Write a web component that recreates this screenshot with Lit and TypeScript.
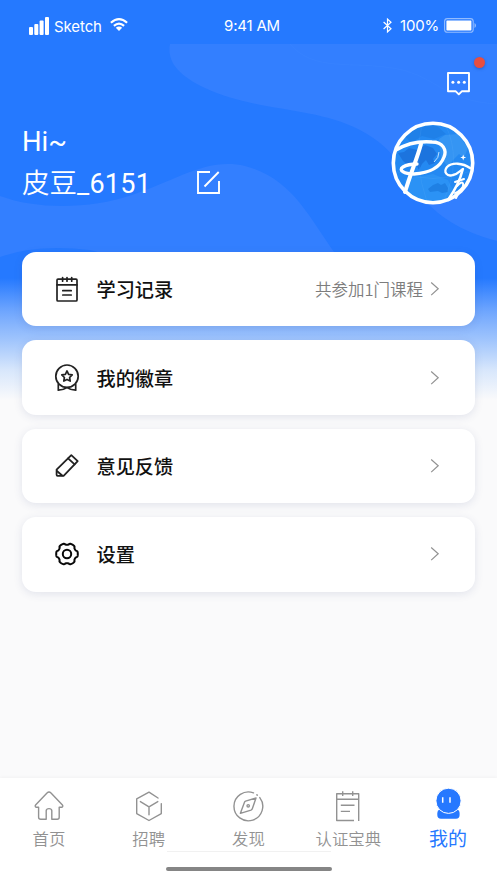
import { LitElement, html, css, svg } from "lit";
import { customElement } from "lit/decorators.js";

const stroke = (size: number, body: unknown, cls = "icon") =>
  html`<svg class=${cls} width=${size} height=${size} viewBox="0 0 ${size} ${size}" fill="none"
    stroke="currentColor" stroke-linecap="round" stroke-linejoin="round">${body}</svg>`;

const recordIcon = stroke(28, svg`
  <g stroke-width="1.7"><rect x="4" y="4.2" width="20" height="21.8" rx="1"/>
  <path d="M4 9.9H24M9.6 2.6V6.2M14 2.6V6.2M18.7 2.6V6.2M9.8 15.7H18.2M9.8 20H18.2"/></g>`);
const badgeIcon = stroke(28, svg`
  <g stroke-width="1.7"><circle cx="14" cy="12.2" r="11.2"/>
  <path d="M14 6.9L15.6 10.4L19.2 10.9L16.6 13.5L17.2 17.1L14 15.4L10.8 17.1L11.4 13.5L8.8 10.9L12.4 10.4Z"/>
  <path d="M5.3 20.3V26.2Q10 26.2 14 23.6Q18 26.2 22.7 26.2V20.3"/></g>`);
const penIcon = stroke(28, svg`
  <g stroke-width="1.8"><path d="M3.6 17.6L18.3 3.2L24.7 9.1L10.6 23.8H4.6Q3.6 23.8 3.6 22.8Z"/>
  <path d="M15.1 6.4L21.6 12.3M3.9 19L9.2 23.5"/></g>`);

// Six shallow teeth spaced evenly around a circular hub.
const gearPath = Array.from({ length: 120 }, (_, i) => {
  const a = (i * Math.PI) / 60;
  const r = 10 + 0.8 * Math.tanh(3 * (Math.cos(6 * a) + 0.35));
  return `${i ? "L" : "M"}${(14 + r * Math.cos(a)).toFixed(2)} ${(14 + r * Math.sin(a)).toFixed(2)}`;
}).join("") + "Z";
const gearIcon = stroke(28, svg`<g stroke-width="2"><circle cx="14" cy="14" r="4.2"/><path d=${gearPath}/></g>`);
const chevron = html`<svg class="chevron" width="10" height="16" viewBox="0 0 10 16" fill="none"
  stroke="#929292" stroke-width="1.2"><path d="M1.2 1.5L8.2 7.8L1.2 14.1"/></svg>`;

const homeIcon = stroke(34, svg`
  <g stroke-width="1.4"><path d="M6.6 18.3H4.2Q2.4 17.5 3.8 15.7L15 4Q17 2.2 19 4L30.2 15.7Q31.6 17.5 29.8 18.3H27.2V28.2Q27.2 30.2 25.2 30.2H19.8V21.6Q19.6 19.6 17 19.6Q14.4 19.6 14.2 21.6V30.2H8.8Q6.6 30.2 6.6 28.2V18.3"/></g>`);
const cubeIcon = stroke(34, svg`
  <g stroke-width="1.4"><path d="M26 9L17 3.1L4.7 9.8V24.6L17 31.5L29.3 24.6V14.6M8.4 12.6L17 17.9L25.8 12.6M17 17.9V25.8"/></g>`);
const compassIcon = stroke(34, svg`
  <g stroke-width="1.4"><path d="M22.5 3.9A14.4 14.4 0 1 0 28.8 8.6"/><path d="M25.8 5.8L26.4 6.2"/>
  <path d="M25 9L14.6 12.2Q13.8 12.6 13.5 13.3L9.4 24.3L20 21.2Q21 20.8 21.3 19.8Z"/><circle cx="17.2" cy="16.8" r="1.2"/></g>`);
const bookIcon = stroke(34, svg`
  <g stroke-width="1.4" stroke-linecap="butt"><path d="M27.7 32V4.8H5.7V31.5H23M5.7 10.3H27.7M11.7 2.2V7M21.7 2.2V7M9.8 16.2H23.5M9.8 22.4H19"/></g>`);
const meIcon = html`<svg class="icon" width="34" height="34" viewBox="0 0 34 34">
  <path d="M8.6 20.5Q6.3 21.1 6.3 24V26Q6.3 29.7 10 29.7H25Q28.6 29.7 28.6 26V24Q28.6 21.1 26.4 20.5" fill="#2678ff"/>
  <circle cx="17.5" cy="11.8" r="12.6" fill="#2678ff" stroke="#fff" stroke-width="1"/>
  <path d="M11.7 8.2V13.7M19 8.2V13.7" stroke="#fff" stroke-width="1.5"/></svg>`;

@customElement("app-root")
export class AppRoot extends LitElement {
  static styles = css`
    :host {
      display: flex; flex-direction: column; position: relative; isolation: isolate;
      width: 497px; height: 883px; overflow: hidden; box-sizing: border-box;
      background: #fafafb; font-family: Roboto, "Noto Sans CJK SC", sans-serif; color: #111;
    }
    svg { display: block; flex: none; overflow: visible; }
    .backdrop { position: absolute; inset: 0 0 auto; z-index: -1; }
    .status {
      height: 44px; display: grid; grid-template-columns: 1fr auto 1fr; align-items: center;
      box-sizing: border-box; padding: 8px 21px 0 29px; color: #fff;
      font: 15px/20px Inter, sans-serif; letter-spacing: -0.2px;
    }
    .carrier, .power { display: flex; align-items: center; }
    .carrier { gap: 5px; }
    .carrier .name { padding-top: 2px; letter-spacing: -0.1px; }
    .carrier .wifi { margin: -3px 0 0 3px; }
    .clock { font-size: 15px; padding-right: 1px; }
    .power { justify-content: flex-end; gap: 5px; }
    .power .bt { margin: -2px 3px 0 0; }
    .power .battery { margin-top: -1px; }
    .hero { height: 208px; display: flex; justify-content: space-between; box-sizing: border-box; padding: 0 22px; color: #fff; }
    .who { padding-top: 77px; font-size: 28px; line-height: 42px; }
    .hi { height: 42px; font-size: 27.5px; }
    .name-row { display: flex; align-items: center; }
    .nick { width: 175px; font-weight: 350; font-size: 27.5px; white-space: nowrap; }
    .digits { font-weight: 400; font-size: 27px; letter-spacing: 0.25px; }
    .edit { margin-top: -4px; }
    .side { display: flex; flex-direction: column; align-items: flex-end; }
    .message { position: relative; margin: 27px 4px 0 0; }
    .dot {
      position: absolute; left: 27px; top: -14px; width: 11px; height: 11px; border-radius: 50%;
      background: #e84e40; box-shadow: 0 1px 3px #1541a080;
    }
    .avatar { margin-top: 25px; }
    .list { display: flex; flex-direction: column; gap: 14px; padding: 0 22px; }
    .card {
      height: 74.4px; box-sizing: border-box; display: flex; align-items: center; background: #fff;
      border-radius: 14px; padding: 0 35px 0 31px; box-shadow: 0 2px 8px rgba(60, 75, 130, 0.13);
    }
    .card .icon { color: #222; }
    .card.dark .icon { color: #080808; }
    .label { margin-left: 15.5px; font-size: 19.2px; line-height: 28px; font-weight: 500; flex: 1; padding-top: 4px; }
    .note {
      color: #7d7d7d; font: 350 16.5px/24px "Noto Sans CJK SC", sans-serif;
      margin-right: 7px;
    }
    .tabs {
      margin-top: auto; height: 105px; background: #fff; box-shadow: 0 -1px 3px #00000009;
      display: flex; flex-direction: column; align-items: center;
    }
    .tab-row { display: grid; grid-template-columns: repeat(5, 1fr); width: 499px; height: 73px; }
    .tab { display: flex; flex-direction: column; align-items: center; color: #929292; padding-top: 11px; box-sizing: border-box; }
    .tab span { font-size: 16.4px; line-height: 24px; margin-top: 5px; white-space: nowrap; font-weight: 350; }
    .tab.on { color: #2678ff; }
    .tab.on span { font-size: 19px; font-weight: 400; }
    .rule { width: 164px; height: 1px; background: #f1f1f1; }
    .grip { width: 166px; height: 4px; border-radius: 2px; background: #858585; margin-top: 15px; }
  `;

  private backdrop() {
    return html`<svg class="backdrop" width="497" height="410" viewBox="0 0 497 410">
      <defs>
        <linearGradient id="fade" x1="0" y1="0" x2="0" y2="1">
          <stop offset="0" stop-color="#fafafb" stop-opacity="0"/>
          <stop offset=".25" stop-color="#fafafb" stop-opacity=".32"/>
          <stop offset=".5" stop-color="#e8f1fb" stop-opacity=".62"/>
          <stop offset=".75" stop-color="#eff5fb" stop-opacity=".88"/>
          <stop offset="1" stop-color="#fafafb"/>
        </linearGradient>
      </defs>
      <path fill="#2579ff" d="M0 0H497V400H0Z"/>
      <path fill="#337fff" d="M170 44H497V241C459 231 438 216 419 194C401 173 400 151 360 130C314 106 256 112 205 88C176 74 167 60 170 44Z"/>
      <path fill="#337fff" d="M0 196C38 210 91 209 132 195C177 180 207 157 245 166C291 178 308 215 334 252L370 310L0 310Z"/>
      <path fill="#2579ff" d="M0 257Q36 244 90 250L210 282V310H0Z"/>
      <path d="M290 44C315 73 351 60 398 69C437 77 444 101 497 104" fill="none" stroke="#3d87ff" stroke-opacity=".35"/>
      <path fill="url(#fade)" d="M0 278H497V400H0Z"/>
    </svg>`;
  }

  private avatar() {
    return html`<svg class="avatar" width="84" height="84" viewBox="0 0 84 84" fill="none">
      <defs><clipPath id="disc"><circle cx="42" cy="42" r="39"/></clipPath></defs>
      <circle cx="42" cy="42" r="39.7" fill="#2489f2"/>
      <g clip-path="url(#disc)">
        <path fill="#1f80e8" d="M14 15Q28 3 46 5L55 13L43 18L31 15L20 22Z"/>
        <path fill="#46a2f3" fill-opacity=".5" d="M48 18L54 14L67 13L77 27L73 37L68 33L63 38L57 46L50 37Z"/>
        <path fill="#1c74de" d="M7 32L13 31L18 27L26 29L34 24L42 27L46 33L42 38L44 42L38 44L35 39L31 43L28 49L25 43L18 45L12 40Z"/>
        <path fill="#319bf8" fill-opacity=".5" d="M13 58L42 53L57 59L65 75L43 82L21 78Z"/>
        <path fill="#1f80e4" d="M37 68L42 64L47 62L50 64L54 62L57 67L57 71L51 72L47 70L39 71Z"/>
        <path stroke="#83c4ff" stroke-opacity=".2" stroke-width=".6" d="M4 50Q42 65 80 50M31 3Q22 41 36 81M54 3Q72 39 52 81"/>
      </g>
      <g stroke="#fff" stroke-linecap="round" stroke-linejoin="round">
        <path stroke-width="3.3" d="M5 29C15 23 29 20 41 21C52 21 56 29 53 36C49 47 37 52 23 53C13 53 7 49 12 46Q17 43 26 43"/>
        <path stroke-width="4" d="M30 23C26 38 20 51 14 71"/>
        <path stroke-width="2.3" d="M79 47C72 42 61 41 56 46C52 51 56 56 62 54C67 53 69 50 72 48"/>
        <path stroke-width="2.6" d="M71.5 49C69 60 64 69 57 79"/>
        <path stroke-width="2" d="M64 61L73 58M66 65C73 57 74 65 69 69Q66 72 64 72M69 69L65 77"/>
      </g>
      <path d="M48 31Q48 37 43 41" stroke="#bfe1ff" stroke-width="1"/>
      <path fill="#fff" d="M72.2 33.5L73 35.8L75.2 36.5L73 37.2L72.2 39.5L71.4 37.2L69.2 36.5L71.4 35.8Z"/>
      <circle cx="42" cy="42" r="39.7" stroke="#fff" stroke-width="3.6"/>
    </svg>`;
  }

  private card(icon: unknown, label: string, note = "", dark = false) {
    return html`<div class="card ${dark ? "dark" : ""}">${icon}<span class="label">${label}</span>
      ${note ? html`<span class="note">${note}</span>` : ""}${chevron}</div>`;
  }

  private tab(icon: unknown, label: string, on = false) {
    return html`<div class="tab ${on ? "on" : ""}">${icon}<span>${label}</span></div>`;
  }

  render() {
    return html`
      ${this.backdrop()}
      <div class="status">
        <div class="carrier">
          <svg width="20" height="18" viewBox="0 0 20 18" fill="#fff"><rect y="10" width="4" height="8" rx="1"/><rect x="5.3" y="7" width="4" height="11" rx="1"/><rect x="10.6" y="3.5" width="4" height="14.5" rx="1"/><rect x="16" width="4" height="18" rx="1"/></svg>
          <span class="name">Sketch</span>
          <svg class="wifi" width="18" height="13" viewBox="0 0 18 13" fill="none" stroke="#fff" stroke-width="2.2"><path d="M.9 4.7Q9-2.6 17.1 4.7M3.9 7.8Q9 3.4 14.1 7.8"/><path fill="#fff" stroke="none" d="M5.8 9.8Q9 7.3 12.2 9.8L9 13Z"/></svg>
        </div>
        <span class="clock">9:41 AM</span>
        <div class="power">
          <svg class="bt" width="9" height="15" viewBox="0 0 9 15" fill="none" stroke="#fff" stroke-width="1.2"><path d="M.6 4L8 10.8L4.5 14V1L8 4.2L.6 11"/></svg>
          <span>100%</span>
          <svg class="battery" width="32" height="15" viewBox="0 0 32 15"><rect x=".6" y=".6" width="28.6" height="13.6" rx="2.8" fill="none" stroke="#fff" stroke-opacity=".5" stroke-width="1.1"/><rect x="2.4" y="2.4" width="25" height="10" rx=".6" fill="#fff"/><path d="M30.5 5V10Q32 9.3 32 7.5T30.5 5" fill="#fff" fill-opacity=".5"/></svg>
        </div>
      </div>
      <div class="hero">
        <div class="who">
          <div class="hi">Hi~</div>
          <div class="name-row">
            <span class="nick">皮豆<span class="digits">_6151</span></span>
            <svg class="edit" width="23" height="23" viewBox="0 0 23 23" fill="none" stroke="#fff" stroke-width="1.9"><path d="M13 1H1V22H22V10M7.5 15.5L21.7 1"/></svg>
          </div>
        </div>
        <div class="side">
          <div class="message">
            <svg width="24" height="25" viewBox="0 0 24 25" fill="none" stroke="#fff" stroke-width="1.9" stroke-linejoin="round"><path d="M1 2H22V20.3H14.8L11.8 23.3L8.8 20.3H1Z"/><g fill="#fff" stroke="none"><circle cx="5.9" cy="11.3" r="1.5"/><circle cx="11.6" cy="11.3" r="1.5"/><circle cx="17.3" cy="11.3" r="1.5"/></g></svg>
            <i class="dot"></i>
          </div>
          ${this.avatar()}
        </div>
      </div>
      <div class="list">
        ${this.card(recordIcon, "学习记录", "共参加1门课程")}
        ${this.card(badgeIcon, "我的徽章")}
        ${this.card(penIcon, "意见反馈")}
        ${this.card(gearIcon, "设置", "", true)}
      </div>
      <div class="tabs">
        <div class="tab-row">
          ${this.tab(homeIcon, "首页")}
          ${this.tab(cubeIcon, "招聘")}
          ${this.tab(compassIcon, "发现")}
          ${this.tab(bookIcon, "认证宝典")}
          ${this.tab(meIcon, "我的", true)}
        </div>
        <div class="rule"></div>
        <div class="grip"></div>
      </div>`;
  }
}
